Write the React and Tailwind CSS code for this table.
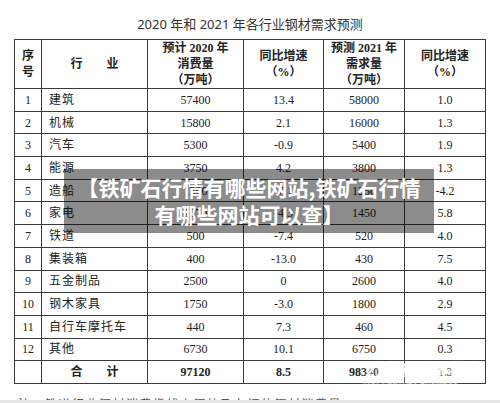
const rows = [
  ['1', '建筑', '57400', '13.4', '58000', '1.0'],
  ['2', '机械', '15800', '2.1', '16000', '1.3'],
  ['3', '汽车', '5300', '-0.9', '5400', '1.9'],
  ['4', '能源', '3750', '4.2', '3800', '1.3'],
  ['5', '造船', '1300', '-7.1', '1250', '-4.2'],
  ['6', '家电', '1370', '-4.3', '1450', '5.8'],
  ['7', '铁道', '500', '-7.4', '520', '4.0'],
  ['8', '集装箱', '400', '-13.0', '430', '7.5'],
  ['9', '五金制品', '2500', '0', '2600', '4.0'],
  ['10', '钢木家具', '1750', '-3.0', '1800', '2.9'],
  ['11', '自行车摩托车', '440', '7.3', '460', '4.5'],
  ['12', '其他', '6730', '10.1', '6750', '0.3'],
];

const cell = 'border border-[#3a3a3a] p-0 text-center align-middle';

export default function App() {
  return (
    <div className="relative w-[500px] h-[403px] overflow-hidden bg-white flex flex-col">
      <div className="h-[39px] pt-[15px] text-center text-[13px] leading-[18px] text-[#333] font-['Noto_Sans','Noto_Sans_CJK_SC',sans-serif]">
        2020 年和 2021 年各行业钢材需求预测
      </div>

      <div className="pl-[14px]">
        <table className="table-fixed border-collapse w-[471px] border-[1.5px] border-[#2a2a2a] text-[12px] text-[#222] font-['Liberation_Serif','Noto_Sans_CJK_SC',serif]">
          <colgroup>
            <col className="w-[27px]" />
            <col className="w-[106px]" />
            <col className="w-[96px]" />
            <col className="w-[80px]" />
            <col className="w-[81px]" />
            <col className="w-[81px]" />
          </colgroup>
          <thead>
            <tr className="h-[45px] font-bold leading-[16px]">
              <th className={cell}>序<br />号</th>
              <th className={cell}>行<span className="inline-block w-[24px]" />业</th>
              <th className={cell}>预计 2020 年<br />消费量<br />（万吨）</th>
              <th className={cell}>同比增速<br />（%）</th>
              <th className={cell}>预测 2021 年<br />需求量<br />（万吨）</th>
              <th className={cell}>同比增速<br />（%）</th>
            </tr>
          </thead>
          <tbody>
            {rows.map(r => (
              <tr key={r[0]} className="h-[22.7px]">
                <td className={cell}>{r[0]}</td>
                <td className={`${cell} !text-left pl-[7px] tracking-[1px]`}>{r[1]}</td>
                <td className={cell}>{r[2]}</td>
                <td className={cell}>{r[3]}</td>
                <td className={cell}>{r[4]}</td>
                <td className={cell}>{r[5]}</td>
              </tr>
            ))}
            <tr className="h-[22.7px] font-bold">
              <td className={cell}></td>
              <td className={cell}>合<span className="inline-block w-[24px]" />计</td>
              <td className={cell}>97120</td>
              <td className={cell}>8.5</td>
              <td className={cell}>98340</td>
              <td className={cell}>1.3</td>
            </tr>
          </tbody>
        </table>
      </div>

      <div className="flex-1 overflow-hidden pt-[14px] pl-[18px] text-[12px] leading-[14px] tracking-[1.5px] text-[#555] font-['Liberation_Serif','Noto_Sans_CJK_SC',serif]">
        注：铁道行业钢材消费指线上钢轨及车辆的钢材消费量。
      </div>
      <div className="h-[3px] bg-[#e6e6e6]" />

      {/* title banner over the table */}
      <div className="absolute left-[64px] top-[169px] w-[370px] h-[64px] bg-black/45 flex flex-col items-center justify-center text-white font-bold text-[21px] leading-[27px] font-['Noto_Sans_CJK_SC',sans-serif]">
        <div className="whitespace-nowrap">【铁矿石行情有哪些网站,铁矿石行情</div>
        <div className="whitespace-nowrap">有哪些网站可以查】</div>
      </div>

      {/* watermark */}
      <div className="absolute left-[362px] top-[360px] w-[122px] flex flex-col items-center text-white/85 [text-shadow:0_0_5px_rgba(255,255,255,1)]">
        <div className="text-[15px] leading-[19px] font-bold tracking-[1px] font-['Noto_Sans_CJK_SC',sans-serif]">21世纪经济报道</div>
        <div className="text-[7px] leading-[9px] italic tracking-[0.3px] font-['Liberation_Sans',sans-serif]">21ST CENTURY BUSINESS HERALD</div>
      </div>
    </div>
  );
}
